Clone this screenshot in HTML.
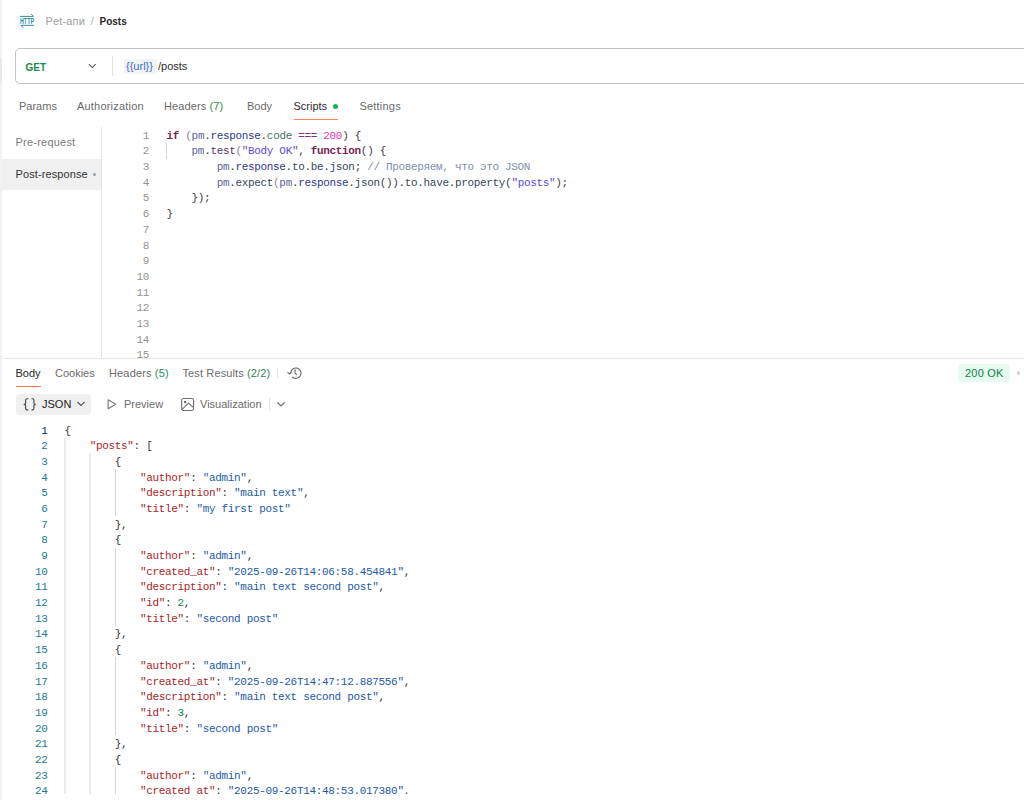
<!DOCTYPE html>
<html><head><meta charset="utf-8">
<style>
*{box-sizing:border-box;margin:0;padding:0}
html,body{width:1024px;height:800px;overflow:hidden;background:#fff}
body{position:relative;font-family:"Liberation Sans",sans-serif;font-size:11px;color:#6b6b6b}
.a{position:absolute;white-space:pre}
.t{position:absolute;white-space:pre;line-height:13px;height:13px}
.strip{left:0;top:0;width:2px;height:800px;background:#f2f2f2}
.mono{font-family:"Liberation Mono",monospace;font-size:11px;letter-spacing:-0.31px}
.ln{position:absolute;text-align:right;white-space:pre;line-height:15.69px}
.code{position:absolute;white-space:pre;line-height:15.69px}
/* script tokens */
.kw{color:#7a1f55;font-weight:bold}
.fn{color:#5c3566}
.id{color:#5f5f9c}
.pr{color:#33378a}
.gr{color:#4a6e5e}
.op{color:#8a2f75}
.nu{color:#ee35a5}
.st{color:#5a47de}
.cm{color:#7f8fae}
.dk{color:#34475c}
.pa{color:#8f7f8f}
/* json tokens */
.k{color:#a82525}
.v{color:#1e5aa8}
.n{color:#098658}
.p{color:#333}
.guide{position:absolute;width:1px;background:#d8d8d8}
</style></head>
<body>
<div class="a strip"></div>
<div class="a" style="left:0;top:57.5px;width:2px;height:25.5px;background:#e9e9e9"></div>

<!-- breadcrumb -->
<svg class="a" style="left:19px;top:13px" width="17" height="16" viewBox="0 0 17 16">
  <g fill="none" stroke="#2e8c9c" stroke-width="1">
    <path d="M1 3.4 H14.5"/><path d="M12.2 1 L14.5 3.4"/>
    <path d="M2 12.3 H15"/><path d="M4.4 14.7 L2 12.3"/>
  </g>
  <text x="1" y="10.6" font-family="Liberation Sans" font-weight="bold" font-size="8.6" fill="#2e8c9c" textLength="14" lengthAdjust="spacingAndGlyphs">HTTP</text>
</svg>
<div class="t" style="left:45.5px;top:15px;color:#9e9e9e;letter-spacing:0.15px">Pet-апи</div>
<div class="t" style="left:90.7px;top:15px;color:#b3b3b3">/</div>
<div class="t" style="left:99.5px;top:15px;color:#2a2a2a;font-weight:bold;font-size:10px">Posts</div>

<!-- url bar -->
<div class="a" style="left:15px;top:48px;width:1100px;height:36px;border:1px solid #c2c2c2;border-radius:5px"></div>
<div class="t" style="left:25.5px;top:60.8px;color:#168a4c;font-weight:bold;font-size:10px">GET</div>
<svg class="a" style="left:88px;top:62px" width="10" height="8" viewBox="0 0 10 8"><path d="M1.25 2.5 L4.4 5.6 L7.5 2.4" fill="none" stroke="#6a6a6a" stroke-width="1.1" stroke-linecap="round" stroke-linejoin="round"/></svg>
<div class="a" style="left:111.5px;top:56px;width:1px;height:20px;background:#e3e3e3"></div>
<div class="a" style="left:123.5px;top:58.5px;width:33px;height:15.5px;background:#f2f3f5;border-radius:3px"></div>
<div class="t" style="left:126px;top:59.5px;color:#3d6dcc">{{url}}</div>
<div class="t" style="left:158px;top:59.5px;color:#2e2e2e">/posts</div>

<!-- request tabs -->
<div class="t" style="left:19px;top:99.5px">Params</div>
<div class="t" style="left:77px;top:99.5px;letter-spacing:0.2px">Authorization</div>
<div class="t" style="left:164px;top:99.5px;letter-spacing:0.1px">Headers <span style="color:#2e8a56">(7)</span></div>
<div class="t" style="left:247px;top:99.5px">Body</div>
<div class="t" style="left:293.5px;top:99.5px;color:#2c2c2c">Scripts</div>
<div class="a" style="left:333px;top:103.7px;width:5px;height:5px;border-radius:50%;background:#12b94f"></div>
<div class="a" style="left:293.5px;top:118.8px;width:44.3px;height:1.6px;background:#f7845e"></div>
<div class="t" style="left:359.5px;top:99.5px;letter-spacing:0.2px">Settings</div>

<!-- sidebar -->
<div class="a" style="left:2px;top:158.7px;width:99px;height:31px;background:#f0f0f0"></div>
<div class="a" style="left:101px;top:127px;width:1px;height:231px;background:#e6e6e6"></div>
<div class="t" style="left:15.5px;top:136px;color:#7a7a7a;letter-spacing:0.22px">Pre-request</div>
<div class="t" style="left:15.5px;top:168px;color:#333333;letter-spacing:0.1px">Post-response</div>
<div class="a" style="left:92.5px;top:172.5px;width:3px;height:3px;border-radius:50%;background:#a0a0a0"></div>

<!-- script editor -->
<div class="a" style="left:102px;top:120px;width:922px;height:238px;overflow:hidden">
  <div class="ln mono" style="left:0;top:8.7px;width:47px;color:#939393">1
2
3
4
5
6
7
8
9
10
11
12
13
14
15</div>
  <div class="guide" style="left:64px;top:23px;height:15.5px"></div>
  <div class="code mono" style="left:64.5px;top:8.7px;color:#3a3a3a;letter-spacing:-0.335px"><span class="kw">if</span> <span class="pa">(</span><span class="id">pm</span>.<span class="pr">response</span>.<span class="gr">code</span> <span class="op">===</span> <span class="nu">200</span>) {
    <span class="id">pm</span>.<span class="fn">test</span><span class="pa">(</span><span class="st">"Body OK"</span>, <span class="kw">function</span>() {
        <span class="id">pm</span>.<span class="pr">response</span>.<span class="dk">to</span>.<span class="dk">be</span>.<span class="dk">json</span>; <span class="cm">// Проверяем, что это JSON</span>
        <span class="id">pm</span>.<span class="dk">expect</span><span class="pa">(</span><span class="id">pm</span>.<span class="pr">response</span>.<span class="dk">json</span>()).<span class="dk">to</span>.<span class="dk">have</span>.<span class="dk">property</span>(<span class="st">"posts"</span>);
    });
}</div>
</div>

<!-- divider -->
<div class="a" style="left:2px;top:358px;width:1022px;height:1px;background:#e6e6e6"></div>

<!-- response tabs -->
<div class="t" style="left:15.5px;top:366.6px;color:#262626">Body</div>
<div class="a" style="left:15.5px;top:385.6px;width:25.5px;height:1.5px;background:#f47b53"></div>
<div class="t" style="left:55px;top:366.6px">Cookies</div>
<div class="t" style="left:109px;top:366.6px;letter-spacing:0.15px">Headers <span style="color:#2e8a56">(5)</span></div>
<div class="t" style="left:182.5px;top:366.6px;letter-spacing:0.12px">Test Results <span style="color:#2e8a56">(2/2)</span></div>
<div class="a" style="left:276.5px;top:368px;width:1px;height:10px;background:#e3e3e3"></div>
<svg class="a" style="left:284px;top:362px" width="22" height="22" viewBox="0 0 22 22">
  <g fill="none" stroke="#6f6f6f" stroke-width="1.15" stroke-linecap="round" stroke-linejoin="round">
    <path d="M8.6 15.2 A5.2 5.2 0 1 0 6.7 11"/>
    <path d="M3.8 10.3 L5.6 12 L7.4 10.4"/>
    <path d="M11.1 7.7 V11.3 L12.7 12.6"/>
  </g>
</svg>
<div class="a" style="left:958px;top:364px;width:52px;height:17.5px;background:#e5fbee;border-radius:4px"></div>
<div class="t" style="left:965px;top:366.8px;color:#137f49;letter-spacing:0.2px">200 OK</div>
<div class="a" style="left:1016.8px;top:371px;width:3.6px;height:3.6px;border-radius:50%;background:#d3d3d3"></div>

<!-- format bar -->
<div class="a" style="left:16px;top:394px;width:74.5px;height:20.5px;background:#f0f0f0;border-radius:4px"></div>
<svg class="a" style="left:22px;top:398px" width="16" height="14" viewBox="0 0 16 14">
  <g fill="none" stroke="#474747" stroke-width="1.15" stroke-linecap="round" stroke-linejoin="round">
    <path d="M5.9 0.7 H5.2 Q3.6 0.7 3.6 2.3 V4.7 Q3.6 6.3 2.1 6.3 Q3.6 6.3 3.6 7.9 V10.3 Q3.6 11.9 5.2 11.9 H5.9"/>
    <path d="M9.9 0.7 H10.3 Q11.9 0.7 11.9 2.3 V4.7 Q11.9 6.3 13.3 6.3 Q11.9 6.3 11.9 7.9 V10.3 Q11.9 11.9 10.3 11.9 H9.9"/>
  </g>
</svg>
<div class="t" style="left:42px;top:397.5px;color:#212121">JSON</div>
<svg class="a" style="left:75.5px;top:400px" width="10" height="8" viewBox="0 0 10 8"><path d="M1.5 2 L5 5.5 L8.5 2" fill="none" stroke="#555" stroke-width="1.1"/></svg>
<svg class="a" style="left:106px;top:398px" width="12" height="13" viewBox="0 0 12 13"><path d="M2.1 1.8 L9.7 6.2 L2.1 10.7 Z" fill="none" stroke="#7a7a7a" stroke-width="1.15" stroke-linejoin="round"/></svg>
<div class="t" style="left:124px;top:397.5px">Preview</div>
<svg class="a" style="left:180px;top:397px" width="15" height="15" viewBox="0 0 15 15">
  <g fill="none" stroke="#6f6f6f" stroke-width="1.1" stroke-linejoin="round">
    <rect x="1.65" y="1.55" width="11.9" height="11.9" rx="1.6"/>
    <path d="M1.9 12.6 L8.5 6.2 L12.9 10.2"/>
  </g>
  <circle cx="5.1" cy="5.1" r="1.25" fill="#6a6a6a"/>
</svg>
<div class="t" style="left:200px;top:397.5px">Visualization</div>
<div class="a" style="left:269px;top:398px;width:1px;height:13px;background:#e3e3e3"></div>
<svg class="a" style="left:276px;top:401px" width="10" height="7" viewBox="0 0 10 7"><path d="M1.5 1.5 L5 5 L8.5 1.5" fill="none" stroke="#6b6b6b" stroke-width="1.1"/></svg>

<!-- json editor -->
<div class="a" style="left:2px;top:418px;width:1022px;height:376px;overflow:hidden">
  <div class="ln mono" style="left:0;top:5.5px;width:45.5px;color:#237893"><span style="color:#0b216f">1</span>
2
3
4
5
6
7
8
9
10
11
12
13
14
15
16
17
18
19
20
21
22
23
24
25</div>
  <div class="guide" style="left:62px;top:18.6px;height:360px;width:2px;background:#ebebeb"></div>
  <div class="guide" style="left:87px;top:34.9px;height:360px;width:2px;background:#ebebeb"></div>
  <div class="guide" style="left:113px;top:51px;height:46.5px;background:#d6d6d6"></div>
  <div class="guide" style="left:113px;top:129.5px;height:78px;background:#d6d6d6"></div>
  <div class="guide" style="left:113px;top:239px;height:78.3px;background:#d6d6d6"></div>
  <div class="guide" style="left:113px;top:349px;height:40px;background:#d6d6d6"></div>
  <div class="code mono p" style="left:62.5px;top:5.5px;letter-spacing:-0.32px">{
    <span class="k">"posts"</span>: [
        {
            <span class="k">"author"</span>: <span class="v">"admin"</span>,
            <span class="k">"description"</span>: <span class="v">"main text"</span>,
            <span class="k">"title"</span>: <span class="v">"my first post"</span>
        },
        {
            <span class="k">"author"</span>: <span class="v">"admin"</span>,
            <span class="k">"created_at"</span>: <span class="v">"2025-09-26T14:06:58.454841"</span>,
            <span class="k">"description"</span>: <span class="v">"main text second post"</span>,
            <span class="k">"id"</span>: <span class="n">2</span>,
            <span class="k">"title"</span>: <span class="v">"second post"</span>
        },
        {
            <span class="k">"author"</span>: <span class="v">"admin"</span>,
            <span class="k">"created_at"</span>: <span class="v">"2025-09-26T14:47:12.887556"</span>,
            <span class="k">"description"</span>: <span class="v">"main text second post"</span>,
            <span class="k">"id"</span>: <span class="n">3</span>,
            <span class="k">"title"</span>: <span class="v">"second post"</span>
        },
        {
            <span class="k">"author"</span>: <span class="v">"admin"</span>,
            <span class="k">"created_at"</span>: <span class="v">"2025-09-26T14:48:53.017380"</span>,
            <span class="k">"description"</span>: <span class="v">"main text second post"</span>,</div>
</div>
</body></html>
